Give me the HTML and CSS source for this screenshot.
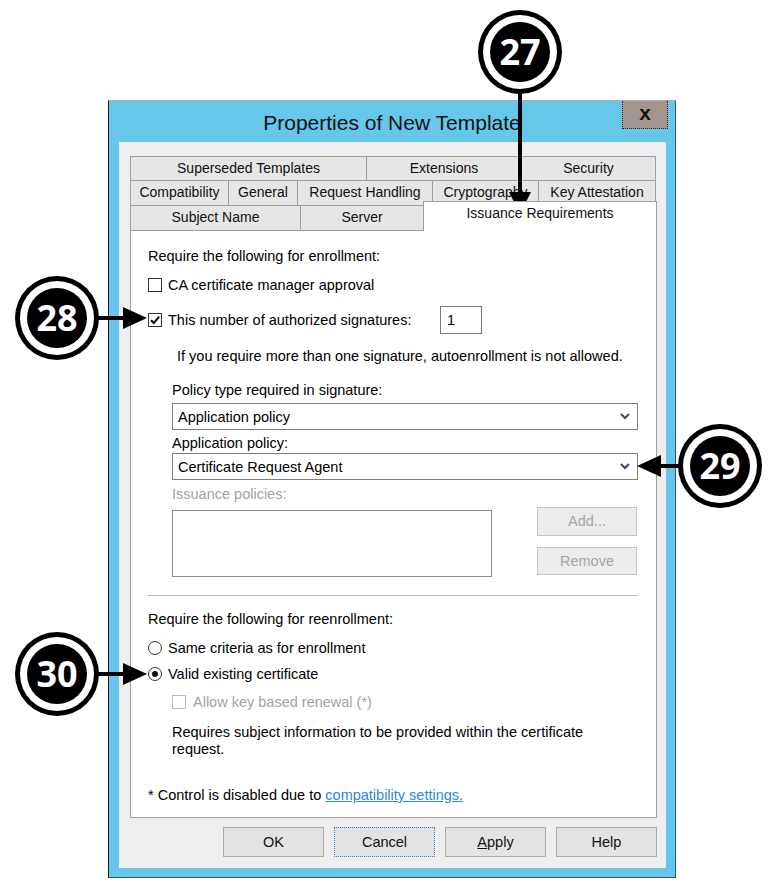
FILE: index.html
```html
<!DOCTYPE html>
<html>
<head>
<meta charset="utf-8">
<link rel="stylesheet" href="styles.css">
</head>
<body>
<div class="page">
  <div class="window">
    <div class="titlebar">
      <span></span>
      <div class="title">Properties of New Template</div>
      <div class="close">x</div>
    </div>
    <div class="client">
      <div class="tabs">
        <div class="tabrow">
          <div class="tab w-sup">Superseded Templates</div>
          <div class="tab w-ext">Extensions</div>
          <div class="tab w-sec">Security</div>
        </div>
        <div class="tabrow">
          <div class="tab w-com">Compatibility</div>
          <div class="tab w-gen">General</div>
          <div class="tab w-req">Request Handling</div>
          <div class="tab w-cry">Cryptography</div>
          <div class="tab w-key">Key Attestation</div>
        </div>
        <div class="tabrow">
          <div class="tab w-sub">Subject Name</div>
          <div class="tab w-srv">Server</div>
          <div class="tab tab-sel w-iss">Issuance Requirements</div>
        </div>
      </div>
      <div class="panel">
        <div class="r r-head">Require the following for enrollment:</div>
        <div class="r r-cb1"><span class="cb"></span><span>CA certificate manager approval</span></div>
        <div class="r r-cb2">
          <span class="cb"><svg width="12" height="12" viewBox="0 0 12 12"><path d="M2 6.2 L4.8 9 L10.2 2.6" fill="none" stroke="#111" stroke-width="2.2"/></svg></span>
          <span class="sig-label">This number of authorized signatures:</span>
          <span class="numbox">1</span>
        </div>
        <div class="r r-note">If you require more than one signature, autoenrollment is not allowed.</div>
        <div class="r r-lbl1 ind">Policy type required in signature:</div>
        <div class="select ind"><span>Application policy</span><svg class="chev" width="10" height="7" viewBox="0 0 10 7"><path d="M1 1 L5 5 L9 1" fill="none" stroke="#3b4a6b" stroke-width="2"/></svg></div>
        <div class="r r-lbl2 ind">Application policy:</div>
        <div class="select select2 ind"><span>Certificate Request Agent</span><svg class="chev" width="10" height="7" viewBox="0 0 10 7"><path d="M1 1 L5 5 L9 1" fill="none" stroke="#3b4a6b" stroke-width="2"/></svg></div>
        <div class="r r-lbl3 ind disabled">Issuance policies:</div>
        <div class="listrow ind">
          <div class="listbox"></div>
          <div class="sidebtns">
            <div class="btn btn-dis">Add...</div>
            <div class="btn btn-dis">Remove</div>
          </div>
        </div>
        <div class="sep"></div>
        <div class="r r-head2">Require the following for reenrollment:</div>
        <div class="r r-rad1"><span class="radio"></span><span>Same criteria as for enrollment</span></div>
        <div class="r r-rad2"><span class="radio radio-on"><span class="dot"></span></span><span>Valid existing certificate</span></div>
        <div class="r r-cb3 ind disabled"><span class="cb cb-dis"></span><span>Allow key based renewal (*)</span></div>
        <div class="r-req ind">Requires subject information to be provided within the certificate<br>request.</div>
        <div class="r r-foot">* Control is disabled due to <span class="link">compatibility settings.</span></div>
      </div>
      <div class="buttons">
        <div class="btn dlg">OK</div>
        <div class="btn dlg focus">Cancel</div>
        <div class="btn dlg"><span class="ul">A</span>pply</div>
        <div class="btn dlg">Help</div>
      </div>
    </div>
  </div>

  <svg class="annot" width="777" height="888" viewBox="0 0 777 888">
    <g>
      <line x1="520" y1="90" x2="520" y2="196" stroke="#000" stroke-width="4"/>
      <polygon points="509,192 531,192 520,214" fill="#000"/>
      <circle cx="520" cy="52" r="42" fill="#000"/>
      <circle cx="520" cy="52" r="37" fill="#fff"/>
      <circle cx="520" cy="52" r="30" fill="#000"/>
      <text x="520" y="65" class="num" text-anchor="middle">27</text>
    </g>
    <g>
      <line x1="95" y1="318" x2="126" y2="318" stroke="#000" stroke-width="4"/>
      <polygon points="123,307 123,329 147,318" fill="#000"/>
      <circle cx="57" cy="318" r="42" fill="#000"/>
      <circle cx="57" cy="318" r="37" fill="#fff"/>
      <circle cx="57" cy="318" r="30" fill="#000"/>
      <text x="57" y="331" class="num" text-anchor="middle">28</text>
    </g>
    <g>
      <line x1="682" y1="466" x2="658" y2="466" stroke="#000" stroke-width="4"/>
      <polygon points="661,455 661,477 637,466" fill="#000"/>
      <circle cx="720" cy="466" r="42" fill="#000"/>
      <circle cx="720" cy="466" r="37" fill="#fff"/>
      <circle cx="720" cy="466" r="30" fill="#000"/>
      <text x="720" y="479" class="num" text-anchor="middle">29</text>
    </g>
    <g>
      <line x1="95" y1="674" x2="126" y2="674" stroke="#000" stroke-width="4"/>
      <polygon points="123,663 123,685 147,674" fill="#000"/>
      <circle cx="57" cy="674" r="42" fill="#000"/>
      <circle cx="57" cy="674" r="37" fill="#fff"/>
      <circle cx="57" cy="674" r="30" fill="#000"/>
      <text x="57" y="687" class="num" text-anchor="middle">30</text>
    </g>
  </svg>
</div>
</body>
</html>
```

FILE: styles.css
```css
* { box-sizing: border-box; }
html, body { margin: 0; padding: 0; background: #fff; }
body {
  font-family: "Liberation Sans", Arial, sans-serif;
  font-size: 14.5px;
  color: #000;
}
.page {
  position: relative;
  width: 777px;
  height: 888px;
  padding-top: 100px;
  padding-left: 108px;
}
.window {
  width: 568px;
  height: 778px;
  background: #66c7ea;
  border: 1px solid;
  border-color: #b0b0b0 #3d4f7a #3d4f7a #1e1e1e;
  display: flex;
  flex-direction: column;
}
.titlebar {
  height: 41px;
  display: grid;
  grid-template-columns: 1fr auto 1fr;
  align-items: start;
}
.title {
  font-size: 21px;
  line-height: 41px;
  color: #111;
  padding-top: 1px;
}
.close {
  justify-self: end;
  margin-right: 7px;
  width: 46px;
  height: 28px;
  background: #a3958f;
  border: 1px dotted #2a2a2a;
  border-top: none;
  font-weight: bold;
  font-size: 21px;
  line-height: 23px;
  text-align: center;
  color: #111;
}
.client {
  flex: 1;
  margin: 0 9px 9px 10px;
  background: #eeeeee;
  padding: 14px 0 0 11px;
}
.tabs { width: 527px; display: flex; flex-direction: column; }
.tabrow { display: flex; height: 25px; align-items: flex-end; }
.tabrow:first-child { height: 24px; }
.tab {
  height: 100%;
  border: 1px solid #a29c9a;
  border-bottom: none;
  margin-right: -1px;
  background: #e6e6e6;
  text-align: center;
  line-height: 23px;
  font-size: 14px;
  white-space: nowrap;
  color: #111;
}
.tab-sel {
  margin-top: -4px;
  background: #fff;
  position: relative;
  z-index: 1;
  margin-bottom: -1px;
  line-height: 22px;
  height: 30px;
}
.w-sup { width: 237px; }
.w-ext { width: 156px; }
.w-sec { width: 135px; }
.w-com { width: 99px; }
.w-gen { width: 70px; }
.w-req { width: 136px; }
.w-cry { width: 107px; }
.w-key { width: 118px; }
.w-sub { width: 171px; }
.w-srv { width: 124px; }
.w-iss { width: 234px; }

.panel {
  width: 527px;
  height: 588px;
  background: #fff;
  border: 1px solid #a29c9a;
  padding-left: 17px;
  padding-right: 18px;
  display: flex;
  flex-direction: column;
}
.r { display: flex; align-items: center; white-space: nowrap; }
.ind { margin-left: 24px; }
.disabled { color: #a3a3a3; }
.r-head { margin-top: 13px; height: 24px; }
.r-cb1 { margin-top: 5px; height: 24px; }
.r-cb2 { margin-top: 9px; height: 28px; }
.r-note { margin-top: 10px; height: 24px; margin-left: 29px; }
.r-lbl1 { margin-top: 12px; height: 20px; }
.r-lbl2 { margin-top: 3px; height: 20px; }
.r-lbl3 { margin-top: 4px; height: 20px; }
.cb {
  width: 14px; height: 14px;
  border: 1px solid #333;
  background: #fff;
  margin-right: 6px;
  display: flex; align-items: center; justify-content: center;
  flex: none;
}
.cb-dis { border-color: #bcbcbc; }
.sig-label { width: 272px; }
.numbox {
  width: 42px; height: 28px;
  border: 1px solid #7a7a7a;
  padding-left: 6px;
  line-height: 26px;
}
.select {
  margin-top: 3px;
  width: 466px;
  height: 27px;
  border: 1px solid #7f7f7f;
  background: #fff;
  display: flex;
  align-items: center;
  justify-content: space-between;
  padding: 0 7px 0 5px;
}
.select2 { margin-top: 0; }
.listrow { margin-top: 3px; display: flex; justify-content: space-between; width: 466px; }
.listbox {
  margin-top: 3px;
  width: 320px; height: 67px;
  border: 1px solid #8a8a8a;
  background: #fff;
}
.sidebtns { display: flex; flex-direction: column; gap: 11px; margin-right: 1px; }
.btn {
  width: 100px; height: 29px;
  border: 1px solid #adadad;
  background: #e3e3e3;
  text-align: center;
  line-height: 27px;
  color: #111;
}
.btn-dis { color: #a6a6a6; background: #ececec; border-color: #c4c4c4; height: 29px; }
.sidebtns .btn:last-child { height: 28px; }
.sep {
  margin-top: 18px;
  height: 1px;
  background: #b8b8b8;
  width: 490px;
}
.r-head2 { margin-top: 11px; height: 24px; }
.r-rad1 { margin-top: 5px; height: 24px; }
.r-rad2 { margin-top: 2px; height: 24px; }
.radio {
  width: 14px; height: 14px;
  border: 1px solid #333;
  border-radius: 50%;
  margin-right: 6px;
  background: #fff;
  display: flex; align-items: center; justify-content: center;
  flex: none;
}
.dot { width: 6px; height: 6px; border-radius: 50%; background: #111; }
.r-cb3 { margin-top: 4px; height: 24px; }
.r-cb3 .cb { margin-right: 7px; }
.r-req { margin-top: 10px; line-height: 17px; }
.r-foot { margin-top: 27px; height: 20px; }
.link { color: #2d8ad8; text-decoration: underline; margin-left: 4px; }

.buttons {
  width: 527px;
  margin-top: 9px;
  display: flex;
  justify-content: flex-end;
  gap: 10px;
}
.dlg { width: 101px; height: 30px; line-height: 28px; }
.focus { border: 1px dotted #3a7fc0; }
.ul { text-decoration: underline; }

.annot {
  position: absolute;
  left: 0; top: 0;
  pointer-events: none;
}
.num {
  font-family: "Open Sans", "Liberation Sans", sans-serif;
  font-weight: 700;
  font-size: 36px;
  fill: #fff;
}
```
